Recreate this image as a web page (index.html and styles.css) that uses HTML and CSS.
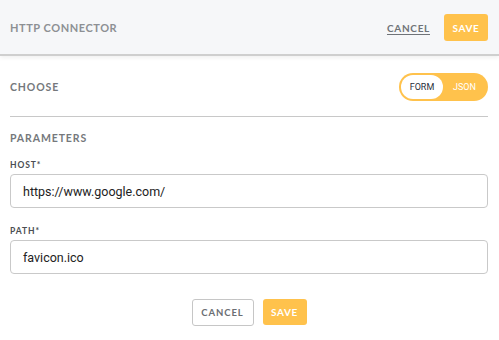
FILE: index.html
```html
<!DOCTYPE html>
<html>
<head>
<meta charset="utf-8">
<link rel="stylesheet" href="styles.css">
</head>
<body>
<header class="header">
  <div class="title">HTTP CONNECTOR</div>
  <div class="header-actions">
    <a class="link-cancel">CANCEL</a>
    <button class="btn-save btn-save-top">SAVE</button>
  </div>
</header>
<main class="content">
  <div class="choose-row">
    <div class="section-title">CHOOSE</div>
    <div class="toggle">
      <span class="toggle-opt active">FORM</span>
      <span class="toggle-opt">JSON</span>
    </div>
  </div>
  <div class="divider"></div>
  <div class="section-title params">PARAMETERS</div>
  <label class="field-label">HOST*</label>
  <div class="input">https://www.google.com/</div>
  <label class="field-label">PATH*</label>
  <div class="input">favicon.ico</div>
  <div class="footer">
    <button class="btn-cancel">CANCEL</button>
    <button class="btn-save">SAVE</button>
  </div>
</main>
</body>
</html>
```
FILE: styles.css
```css
html, body { margin: 0; padding: 0; background: #fff; }
body { font-family: Lato, "Open Sans", sans-serif; width: 499px; height: 340px; overflow: hidden; }
.header {
  height: 56px;
  box-sizing: border-box;
  background: #f6f7f9;
  border-bottom: 2px solid #cfcfcf;
  box-shadow: 0 2px 4px rgba(0,0,0,0.06);
  display: flex;
  align-items: center;
  justify-content: space-between;
  padding: 0 11px 0 10px;
}
.title { font-weight: 700; font-size: 11px; letter-spacing: 0.55px; color: #8d9094; margin-top: 1px; }
.header-actions { display: flex; align-items: center; gap: 14px; margin-top: 1px; }
.link-cancel { font-size: 10px; font-weight: 700; letter-spacing: 0.7px; color: #6f7378; text-decoration: underline; text-underline-offset: 2px; }
.btn-save {
  width: 44px; height: 26px; border: none; border-radius: 3px;
  background: #ffc24c; color: #fff; font-family: Lato, sans-serif; font-weight: 700; font-size: 10px; letter-spacing: 0.6px; padding: 0;
}
.btn-save-top { height: 27px; }
.content { padding: 0 11px 0 10px; }
.choose-row { height: 60px; display: flex; align-items: center; justify-content: space-between; padding-top: 1px; box-sizing: border-box; }
.section-title { font-weight: 700; font-size: 10.5px; letter-spacing: 0.9px; color: #75787c; }
.toggle {
  width: 89px; height: 28px; box-sizing: border-box; border-radius: 14px;
  background: #ffc24c; display: flex; align-items: center; padding: 2px;
  font-family: Roboto, sans-serif; font-size: 9px;
}
.toggle-opt { flex: 1; height: 24px; display: flex; align-items: center; justify-content: center; color: #fff; border-radius: 12px; }
.toggle-opt.active { background: #fff; color: #2a2f3a; flex: 0 0 42px; }
.divider { height: 1px; background: #c8c8c8; }
.params { margin-top: 15px; }
.field-label { display: block; font-weight: 700; font-size: 8.5px; letter-spacing: 0.9px; color: #4a4d52; margin-top: 16px; }
.input + .field-label { margin-top: 18px; }
.input {
  height: 34px; box-sizing: border-box; border: 1px solid #c9c9c9; border-radius: 4px;
  margin-top: 4px; display: flex; align-items: center; padding-left: 12px;
  font-family: Roboto, sans-serif; font-size: 12.5px; color: #222;
}
.footer { display: flex; justify-content: center; gap: 9px; margin-top: 25px; }
.btn-cancel {
  width: 62px; height: 27px; box-sizing: border-box; border: 1px solid #c6c6c6; border-radius: 3px;
  background: #fff; color: #6b6e73; font-family: Lato, sans-serif; font-weight: 700; font-size: 9.5px; letter-spacing: 0.9px; padding: 0;
}
.footer .btn-save { height: 26px; }
```
